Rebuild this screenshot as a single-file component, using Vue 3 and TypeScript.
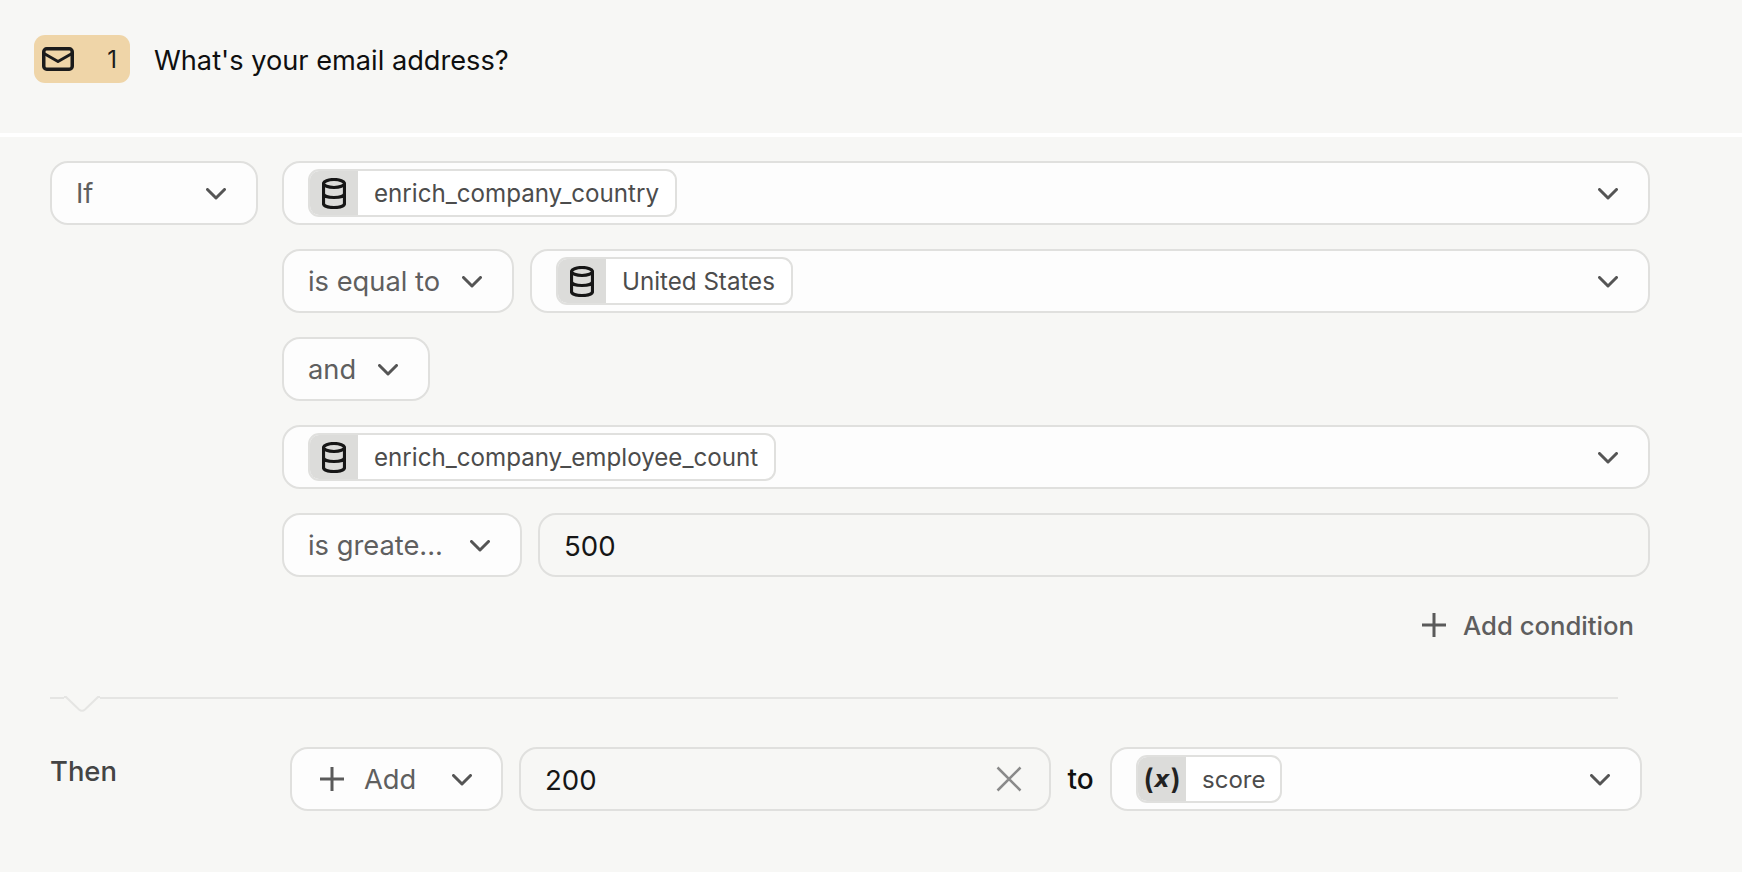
<script setup lang="ts">
interface Chip { kind: 'db' | 'var'; label: string }
const firstChip: Chip = { kind: 'db', label: 'enrich_company_country' }
const secondChip: Chip = { kind: 'db', label: 'United States' }
const thirdChip: Chip = { kind: 'db', label: 'enrich_company_employee_count' }
</script>

<template>
  <main class="page">
    <header class="head">
      <div class="badge">
        <svg class="mail" viewBox="0 0 32 24" fill="none">
          <rect x="1.75" y="1.75" width="28.5" height="20.5" rx="3" />
          <path d="M2 6.500l14 8 14-8" />
        </svg>
        <span class="num">1</span>
      </div>
      <h1 class="question">What's your email address?</h1>
    </header>

    <section class="body">
      <div class="if-row">
        <div class="box sel if-sel">
          <span class="txt">If</span>
          <svg class="chev" viewBox="0 0 20 12" fill="none"><path d="M1.5 1.5L10 10l8.5-8.5" /></svg>
        </div>
        <div class="stack">
          <div class="box field">
            <span class="chip">
              <span class="chip-ic">
                <svg class="db" viewBox="0 0 24 31" fill="none"><ellipse cx="12" cy="5.500" rx="10.5" ry="4" /><path d="M1.500 5.500v20c0 2.500 4.700 4 10.500 4s10.500-1.500 10.500-4v-20M1.500 15.500c0 2.500 4.700 4 10.500 4s10.500-1.500 10.500-4" /></svg>
              </span>
              <span class="chip-txt">{{ firstChip.label }}</span>
            </span>
            <svg class="chev" viewBox="0 0 20 12" fill="none"><path d="M1.5 1.5L10 10l8.5-8.5" /></svg>
          </div>

          <div class="line">
            <div class="box sel equal">
              <span class="txt">is equal to</span>
              <svg class="chev" viewBox="0 0 20 12" fill="none"><path d="M1.5 1.5L10 10l8.5-8.5" /></svg>
            </div>
            <div class="box field grow">
              <span class="chip">
                <span class="chip-ic">
                  <svg class="db" viewBox="0 0 24 31" fill="none"><ellipse cx="12" cy="5.500" rx="10.5" ry="4" /><path d="M1.500 5.500v20c0 2.500 4.700 4 10.500 4s10.500-1.500 10.500-4v-20M1.500 15.500c0 2.500 4.700 4 10.500 4s10.500-1.500 10.500-4" /></svg>
                </span>
                <span class="chip-txt">{{ secondChip.label }}</span>
              </span>
              <svg class="chev" viewBox="0 0 20 12" fill="none"><path d="M1.5 1.5L10 10l8.500-8.500" /></svg>
            </div>
          </div>

          <div class="box sel and">
            <span class="txt">and</span>
            <svg class="chev" viewBox="0 0 20 12" fill="none"><path d="M1.5 1.5L10 10l8.500-8.500" /></svg>
          </div>

          <div class="box field">
            <span class="chip">
              <span class="chip-ic">
                <svg class="db" viewBox="0 0 24 31" fill="none"><ellipse cx="12" cy="5.500" rx="10.5" ry="4" /><path d="M1.500 5.500v20c0 2.500 4.700 4 10.500 4s10.500-1.500 10.500-4v-20M1.500 15.500c0 2.500 4.700 4 10.500 4s10.500-1.500 10.500-4" /></svg>
              </span>
              <span class="chip-txt">{{ thirdChip.label }}</span>
            </span>
            <svg class="chev" viewBox="0 0 20 12" fill="none"><path d="M1.5 1.5L10 10l8.500-8.500" /></svg>
          </div>

          <div class="line">
            <div class="box sel greater">
              <span class="txt">is greate...</span>
              <svg class="chev" viewBox="0 0 20 12" fill="none"><path d="M1.5 1.5L10 10l8.500-8.500" /></svg>
            </div>
            <div class="box input grow">
              <span class="val">500</span>
            </div>
          </div>

          <div class="add-cond">
            <svg class="plus" viewBox="0 0 24 24" fill="none"><path d="M12 0v24M0 12h24" /></svg>
            <span>Add condition</span>
          </div>
        </div>
      </div>

      <div class="divider">
        <svg class="notch" viewBox="0 0 36 16" fill="none"><path d="M0 1h2l13 12.500q3 2.500 6 0L34 1h2" /></svg>
      </div>

      <div class="then-row">
        <span class="then">Then</span>
        <div class="box sel add">
          <svg class="plus" viewBox="0 0 24 24" fill="none"><path d="M12 0v24M0 12h24" /></svg>
          <span class="txt">Add</span>
          <svg class="chev" viewBox="0 0 20 12" fill="none"><path d="M1.5 1.500L10 10l8.500-8.500" /></svg>
        </div>
        <div class="box input amount">
          <span class="val">200</span>
          <svg class="close" viewBox="0 0 26 26" fill="none"><path d="M1.500 1.500l23 23M24.500 1.500l-23 23" /></svg>
        </div>
        <span class="to">to</span>
        <div class="box field target">
          <span class="chip">
            <span class="chip-ic var"><span class="paren">(</span><i class="x">x</i><span class="paren">)</span></span>
            <span class="chip-txt score">score</span>
          </span>
          <svg class="chev" viewBox="0 0 20 12" fill="none"><path d="M1.5 1.500L10 10l8.500-8.500" /></svg>
        </div>
      </div>
    </section>
  </main>
</template>

<style>
html, body { margin: 0; background: #f7f7f5; }
</style>

<style scoped>
.page {
  width: 1742px;
  height: 872px;
  background: #f7f7f5;
  font-family: Inter, "Liberation Sans", sans-serif;
  overflow: hidden;
}
.head {
  height: 133px;
  box-sizing: content-box;
  border-bottom: 4px solid #ffffff;
  display: flex;
  align-items: flex-start;
  padding-left: 34px;
  gap: 24px;
}
.badge {
  margin-top: 35px;
  width: 96px;
  height: 48px;
  border-radius: 11px;
  background: #efd5a8;
  display: flex;
  align-items: center;
  justify-content: space-between;
  padding: 0 13px 0 8px;
  box-sizing: border-box;
}
.mail { width: 32px; height: 24px; }
.mail rect, .mail path { stroke: #1b1b1b; stroke-width: 3.5; stroke-linejoin: round; stroke-linecap: round; }
.mail path { stroke-width: 3; }
.num { font-size: 24px; color: #1b1b1b; }
.question {
  margin: 36px 0 0;
  line-height: 50px;
  font-size: 27.2px;
  font-weight: 400;
  color: #0f0f0f;
}
.body {
  padding: 24px 92px 0 50px;
}
.if-row { display: flex; gap: 24px; align-items: flex-start; }
.stack { flex: 1; display: flex; flex-direction: column; gap: 24px; min-width: 0; }
.line { display: flex; gap: 16px; }
.grow { flex: 1; min-width: 0; }
.box {
  height: 64px;
  box-sizing: border-box;
  border: 2.5px solid #e0e0de;
  border-radius: 18px;
  background: #fdfdfd;
  display: flex;
  align-items: center;
  flex-shrink: 0;
}
.sel { padding: 0 30px 0 24px; justify-content: space-between; }
.if-sel { width: 208px; }
.equal { width: 232px; }
.and { width: 148px; }
.greater { width: 240px; }
.field { padding: 0 30px 0 24px; justify-content: space-between; }
.input { background: transparent; padding: 0 23px 0 24px; justify-content: space-between; }
.txt { font-size: 27.3px; color: #5f5f5f; white-space: nowrap; }
.val { font-size: 27.6px; color: #161616; padding-top: 1px; }
.chev { width: 20px; height: 12px; flex-shrink: 0; margin-top: 1px; }
.chev path { stroke: #555; stroke-width: 3; stroke-linecap: round; stroke-linejoin: round; }
.chip {
  height: 48px;
  box-sizing: border-box;
  border: 2.5px solid #e0e0de;
  border-radius: 11px;
  background: #fff;
  display: flex;
  align-items: center;
  overflow: hidden;
}
.chip-ic {
  width: 48px;
  height: 100%;
  background: #dcdcda;
  display: flex;
  align-items: center;
  justify-content: center;
}
.db { width: 24px; height: 31px; }
.db ellipse, .db path { stroke: #161616; stroke-width: 3.2; }
.chip-txt { padding: 0 16px; font-size: 24.15px; color: #4c4c4c; white-space: nowrap; }
.score { font-size: 24px; padding-right: 15px; }
.add-cond {
  align-self: flex-end;
  margin-top: 4px;
  margin-right: 16px;
  display: flex;
  align-items: center;
  gap: 17px;
  height: 40px;
  font-size: 25.7px;
  font-weight: 450;
  color: #5e5e5e;
}
.plus { width: 24px; height: 24px; flex-shrink: 0; }
.plus path { stroke: #5a5a5a; stroke-width: 3; }
.divider {
  position: relative;
  margin-top: 52px;
  margin-right: 32px;
  height: 2px;
  background: #e5e5e3;
}
.notch { position: absolute; left: 14px; top: -1px; width: 36px; height: 16px; background: #f7f7f5; }
.notch path { stroke: #e5e5e3; stroke-width: 2; }
.then-row {
  display: flex;
  align-items: flex-start;
  margin-top: 48px;
  margin-right: 8px;
}
.then {
  width: 240px;
  font-size: 27.4px;
  font-weight: 450;
  color: #444;
  margin-top: 7px;
}
.add { width: 213px; margin-right: 16px; justify-content: flex-start; padding: 0 29px 0 28px; gap: 20px; }
.add .chev { margin-left: auto; }
.amount { width: 532px; padding-right: 27px; }
.close { width: 26px; height: 26px; }
.close path { stroke: #8a8a8a; stroke-width: 2.5; }
.to { width: 59px; height: 64px; line-height: 64px; text-align: center; font-size: 28px; font-weight: 500; color: #111; }
.target { flex: 1; min-width: 0; }
.chip-ic.var { color: #222; font-size: 28px; font-weight: 600; }
.x { font-family: "DejaVu Sans", sans-serif; font-weight: 700; font-style: italic; font-size: 23px; margin: 0 1px; }
.paren { font-weight: 600; }
</style>
